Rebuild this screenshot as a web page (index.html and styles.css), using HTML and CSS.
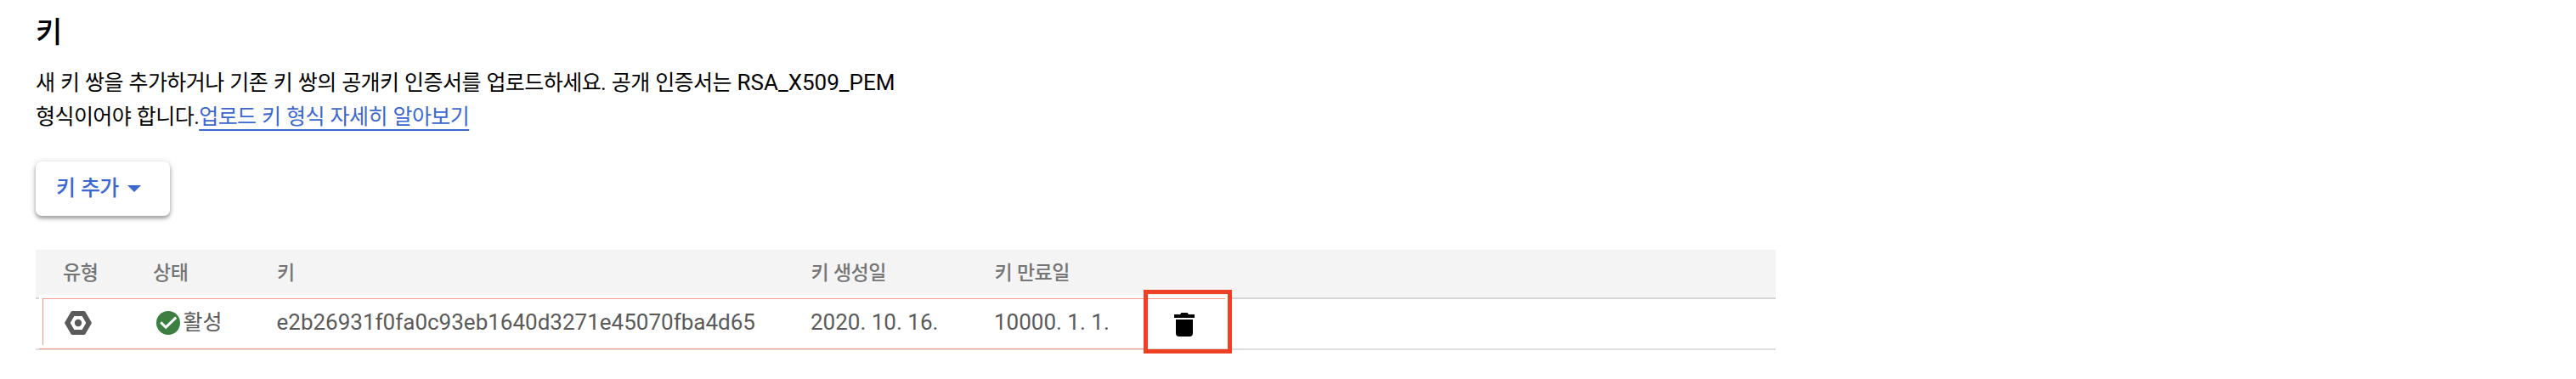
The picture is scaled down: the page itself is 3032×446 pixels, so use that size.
FILE: index.html
```html
<!DOCTYPE html>
<html lang="ko">
<head>
<meta charset="utf-8">
<title>키</title>
<link rel="stylesheet" href="styles.css">
</head>
<body>
<main class="page">
  <h1 class="title">키</h1>
  <p class="intro"><span class="ko">새 키 쌍을 추가하거나 기존 키 쌍의 공개키 인증서를 업로드하세요. 공개 인증서는 </span>RSA_X509_PEM<br><span class="ko">형식이어야 합니다.</span><a class="ko link" href="#">업로드 키 형식 자세히 알아보기</a></p>
  <button class="add" type="button">키 추가<svg class="caret" viewBox="0 0 16 8"><path d="M0 0h16L8 8z"/></svg></button>
  <section class="table">
    <div class="row head">
      <span>유형</span><span>상태</span><span>키</span><span>키 생성일</span><span>키 만료일</span><span></span>
    </div>
    <div class="highlight"><i class="edge"></i></div>
    <div class="row item">
      <span class="cell"><svg class="hex" viewBox="0 0 32 28"><path fill-rule="evenodd" d="M9.2 0h13.6a2 2 0 0 1 1.7 1l7 12a2 2 0 0 1 0 2l-7 12a2 2 0 0 1-1.7 1H9.2a2 2 0 0 1-1.7-1l-7-12a2 2 0 0 1 0-2l7-12a2 2 0 0 1 1.7-1zM11.3 6 6.7 14l4.6 8h9.4l4.6-8-4.6-8z"/><circle cx="16" cy="14" r="4.2"/></svg></span>
      <span class="cell"><svg class="check" viewBox="0 0 28 28"><circle cx="14" cy="14" r="14"/><path d="M5.2 13.2l6 6L23.2 7.6"/></svg><span class="state">활성</span></span>
      <span>e2b26931f0fa0c93eb1640d3271e45070fba4d65</span>
      <span>2020. 10. 16.</span>
      <span>10000. 1. 1.</span>
      <span class="cell"><svg class="trash" viewBox="0 0 24 28"><path d="M0 2h7l1.4-2h7.2L17 2h7v4H0zM2 8h20v16a4 4 0 0 1-4 4H6a4 4 0 0 1-4-4z"/></svg></span>
    </div>
    <div class="marker"></div>
  </section>
</main>
</body>
</html>
```

FILE: styles.css
```css
body {
  margin: 0;
  background: #fff;
  color: #000;
  font: 400 26px/40px Roboto, "Noto Sans CJK KR", sans-serif;
}
.page {
  box-sizing: border-box;
  width: 2090px;
  height: 446px;
  padding: 14px 0 0 42px;
  overflow: hidden;
}
.title {
  margin: 0;
  font-size: 34px;
  font-weight: 500;
  line-height: 48px;
}
.intro {
  margin: 15px 0 0;
  white-space: nowrap;
}
.ko {
  font-size: 25px;
  line-height: 1;
  letter-spacing: -.55px;
  word-spacing: .9px;
}
.link {
  color: #3b67d0;
  text-decoration: underline;
  text-decoration-thickness: 2px;
  text-underline-offset: 6px;
  text-decoration-skip-ink: none;
}
.add {
  display: flex;
  align-items: center;
  box-sizing: border-box;
  width: 158px;
  height: 64px;
  margin: 33px 0 0;
  padding: 0 0 0 24px;
  border: 0;
  border-radius: 7px;
  background: #fff;
  box-shadow: 0 3px 4px rgba(0, 0, 0, .32), 0 1px 9px rgba(0, 0, 0, .16);
  color: #3b67d0;
  font: inherit;
  font-size: 25px;
  font-weight: 500;
  letter-spacing: -.6px;
  word-spacing: .9px;
}
.caret {
  width: 16px;
  height: 8px;
  margin: 0 0 0 10.5px;
  fill: currentColor;
}
.table {
  position: relative;
  margin-top: 40px;
}
.row {
  display: grid;
  grid-template-columns: 106px 146px 628.5px 216px 212px 1fr;
  box-sizing: border-box;
  padding-left: 31.5px;
  white-space: nowrap;
}
.head {
  height: 58px;
  padding: 7.5px 0 0 32px;
  border-bottom: 2px solid #d6d6d6;
  background: #f4f4f4;
  color: #757575;
  font-size: 23px;
  font-weight: 500;
  letter-spacing: -.5px;
  word-spacing: .5px;
}
.item {
  position: relative;
  height: 60px;
  padding-top: 7px;
  border-bottom: 2px solid #dedede;
  color: #5a5a5a;
}
.cell {
  display: flex;
  align-items: flex-start;
}
.hex {
  width: 32px;
  height: 28px;
  margin: 7px 0 0 2.5px;
  fill: #5a5a5a;
}
.check {
  width: 28px;
  height: 28px;
  margin: 7px 0 0 4.5px;
  fill: #3c7f40;
}
.check path {
  fill: none;
  stroke: #fff;
  stroke-width: 3;
}
.state {
  margin: .5px 0 0 3.5px;
  font-size: 25px;
}
.trash {
  width: 24px;
  height: 28px;
  margin: 9px 0 0;
  fill: #000;
}
/* thin outline around the key row */
.highlight {
  position: absolute;
  left: 4px;
  top: 53px;
  width: 1400px;
  height: 63px;
  background: #fff;
}
.highlight::before {
  content: "";
  position: absolute;
  left: 4px;
  top: 4px;
  width: 1392px;
  height: 1px;
  background: #f49c8a;
}
.highlight::after {
  content: "";
  position: absolute;
  z-index: 1;
  left: 0;
  top: 63px;
  width: 1300px;
  height: 1px;
  background: #f49c8a;
}
.edge {
  position: absolute;
  left: 4px;
  top: 4px;
  width: 1px;
  height: 55px;
  background: #f49c8a;
}
/* callout box around the delete button */
.marker {
  position: absolute;
  z-index: 2;
  left: 1303.5px;
  top: 47px;
  box-sizing: border-box;
  width: 104px;
  height: 75px;
  border: 5px solid #ed4024;
}
```
